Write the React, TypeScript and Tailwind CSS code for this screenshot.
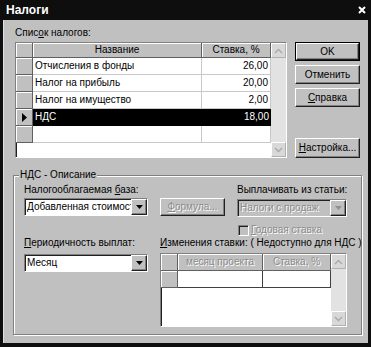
import React from "react";

const raised =
  "border border-t-white border-l-white border-r-[#202020] border-b-[#202020] shadow-[inset_-1px_-1px_0_#808080]";
const sunken =
  "border border-t-[#808080] border-l-[#808080] border-r-white border-b-white shadow-[inset_1px_1px_0_#202020]";
const etched = "text-[#8c8c8c] [text-shadow:1px_1px_0_#fff]";
const headCell =
  "bg-[#c0c0c0] border-r border-b border-[#606060] shadow-[inset_1px_1px_0_#fff]";
const dataCell = "border-r border-b border-[#c8c8c8]";

function DownArrow({ color = "#000" }: { color?: string }) {
  return (
    <svg width="7" height="4" viewBox="0 0 7 4">
      <polygon points="0,0 7,0 3.5,4" fill={color} />
    </svg>
  );
}

function Chevron({ up }: { up?: boolean }) {
  return (
    <svg width="9" height="6" viewBox="0 0 9 6">
      <polyline
        points={up ? "1,5 4.5,1.5 8,5" : "1,1 4.5,4.5 8,1"}
        fill="none"
        stroke="#a8a8a8"
        strokeWidth="1.4"
      />
    </svg>
  );
}

function ScrollBar() {
  return (
    <div className="flex w-[15px] h-full flex-col bg-[#e2e2e2]">
      <div className="flex h-[15px] items-center justify-center bg-[#d8d8d8] border border-t-white border-l-white border-r-[#b0b0b0] border-b-[#b0b0b0]">
        <Chevron up />
      </div>
      <div className="flex-1" />
      <div className="flex h-[15px] items-center justify-center bg-[#d8d8d8] border border-t-white border-l-white border-r-[#b0b0b0] border-b-[#b0b0b0]">
        <Chevron />
      </div>
    </div>
  );
}

function Combo({ text, className, disabled }: { text: string; className: string; disabled?: boolean }) {
  return (
    <div className={`flex h-[18px] ${sunken} ${disabled ? "bg-[#c0c0c0]" : "bg-white"} ${className}`}>
      <div className={`flex-1 overflow-hidden whitespace-nowrap pl-[2px] leading-[16px] ${disabled ? etched : ""}`}>
        {text}
      </div>
      <div className={`flex h-[16px] w-[16px] items-center justify-center bg-[#c0c0c0] ${raised}`}>
        <DownArrow color={disabled ? "#909090" : "#000"} />
      </div>
    </div>
  );
}

function Button({ children, className = "" }: { children: React.ReactNode; className?: string }) {
  return (
    <div className={`flex items-center justify-center bg-[#c0c0c0] ${raised} ${className}`}>{children}</div>
  );
}

const taxes = [
  ["Отчисления в фонды", "26,00"],
  ["Налог на прибыль", "20,00"],
  ["Налог на имущество", "2,00"],
  ["НДС", "18,00"],
];

export default function App() {
  return (
    <div className="flex h-[347px] w-[371px] flex-col overflow-hidden bg-[#0e0e0e] font-['Liberation_Sans',Arial,sans-serif] text-[10px] leading-[12px] text-black">
      {/* title bar */}
      <div className="flex h-[20px] items-center justify-between pl-[6px] pr-[5px]">
        <span className="text-[12px] font-bold text-white">Налоги</span>
        <svg width="8" height="8" viewBox="0 0 8 8">
          <path d="M1 1L7 7M7 1L1 7" stroke="#fff" strokeWidth="2" />
        </svg>
      </div>

      {/* body */}
      <div className="mx-[3px] h-[323px] bg-[#c0c0c0] pl-[10px] pt-[7px] shadow-[inset_1px_0_0_#e0e0e0]">
        <div className="ml-[2px]">
          Спис<span className="underline">о</span>к налогов:
        </div>

        <div className="ml-[2px] mt-[3px] flex">
          {/* taxes grid */}
          <div className={`flex h-[116px] w-[272px] bg-white ${sunken}`}>
            <div className="flex flex-1 flex-col">
              <div className="flex h-[15px]">
                <div className={`w-[17px] ${headCell}`} />
                <div className={`flex w-[169px] items-center justify-center ${headCell}`}>Название</div>
                <div className={`flex w-[69px] items-center justify-center ${headCell}`}>Ставка, %</div>
              </div>
              {taxes.map(([name, rate], i) => {
                const sel = i === 3;
                return (
                  <div key={name} className="flex h-[17px]">
                    <div className={`flex w-[17px] items-center justify-center ${headCell}`}>
                      {sel && (
                        <svg width="5" height="9" viewBox="0 0 5 9">
                          <polygon points="0,0 5,4.5 0,9" fill="#000" />
                        </svg>
                      )}
                    </div>
                    <div
                      className={`flex w-[169px] items-center pl-[2px] ${sel ? "bg-black text-white border-b border-black" : dataCell}`}
                    >
                      {name}
                    </div>
                    <div
                      className={`flex w-[69px] items-center justify-end pr-[2px] ${sel ? "bg-black text-white border-b border-black" : dataCell}`}
                    >
                      {rate}
                    </div>
                  </div>
                );
              })}
              <div className="flex h-[17px]">
                <div className={`w-[17px] ${headCell}`} />
                <div className={`w-[169px] ${dataCell}`} />
                <div className={`w-[69px] ${dataCell}`} />
              </div>
            </div>
            <ScrollBar />
          </div>

          {/* buttons */}
          <div className="ml-[8px] flex h-[116px] w-[65px] flex-col gap-[4px]">
            <div className="h-[19px] border border-black">
              <Button className="h-full">OK</Button>
            </div>
            <Button className="h-[19px]">Отменить</Button>
            <Button className="h-[19px]">
              <span className="underline">С</span>правка
            </Button>
            <Button className="mt-auto h-[20px]">
              <span className="underline">Н</span>астройка...
            </Button>
          </div>
        </div>

        {/* group box */}
        <div className="relative mt-[17px] flex h-[160px] w-[349px] border border-[#808080] pl-[10px] pt-[8px] shadow-[inset_1px_1px_0_#fff,1px_1px_0_#fff]">
          <span className="absolute left-[5px] top-[-7px] bg-[#c0c0c0] px-[1px]">НДС - Описание</span>

          <div className="flex w-[124px] flex-col">
            <div className="whitespace-nowrap">
              Налогооблагаемая <span className="underline">б</span>аза:
            </div>
            <Combo text="Добавленная стоимость" className="mt-[2px] w-[124px]" />
            <div className="mt-[21px] whitespace-nowrap">
              <span className="underline">П</span>ериодичность выплат:
            </div>
            <Combo text="Месяц" className="mt-[5px] w-[124px]" />
          </div>

          <div className="ml-[12px] flex w-[187px] flex-col">
            <div className="flex">
              <Button className={`mt-[14px] h-[18px] w-[65px] ${etched}`}>
                <span className="underline">Ф</span>ормула...
              </Button>
              <div className="ml-[12px] flex w-[110px] flex-col">
                <div className="whitespace-nowrap">Выплачивать из статьи:</div>
                <Combo text="Налоги с продаж" className="mt-[3px] w-[110px]" disabled />
                <div className="mt-[7px] flex h-[12px] items-center">
                  <div className={`ml-[1px] h-[11px] w-[11px] bg-[#c0c0c0] ${sunken}`} />
                  <span className={`ml-[2px] whitespace-nowrap ${etched}`}>
                    <span className="underline">Г</span>одовая ставка
                  </span>
                </div>
              </div>
            </div>
            <div className="mt-[1px] whitespace-nowrap">
              <span className="underline">И</span>зменения ставки: ( Недоступно для НДС )
            </div>

            {/* rate changes grid */}
            <div className={`mt-[4px] flex h-[74px] w-[187px] bg-white ${sunken}`}>
              <div className="flex flex-1 flex-col">
                <div className="flex h-[17px]">
                  <div className={`w-[17px] ${headCell}`} />
                  <div className={`flex w-[85px] items-center justify-center ${headCell} ${etched}`}>
                    месяц проекта
                  </div>
                  <div className={`flex w-[68px] items-center justify-center ${headCell} ${etched}`}>
                    Ставка, %
                  </div>
                </div>
                <div className="flex h-[17px]">
                  <div className={`w-[17px] ${headCell}`} />
                  <div className="w-[85px] border-r border-b border-[#404040]" />
                  <div className="w-[68px] border-r border-b border-[#404040]" />
                </div>
              </div>
              <ScrollBar />
            </div>
          </div>
        </div>
      </div>
    </div>
  );
}
